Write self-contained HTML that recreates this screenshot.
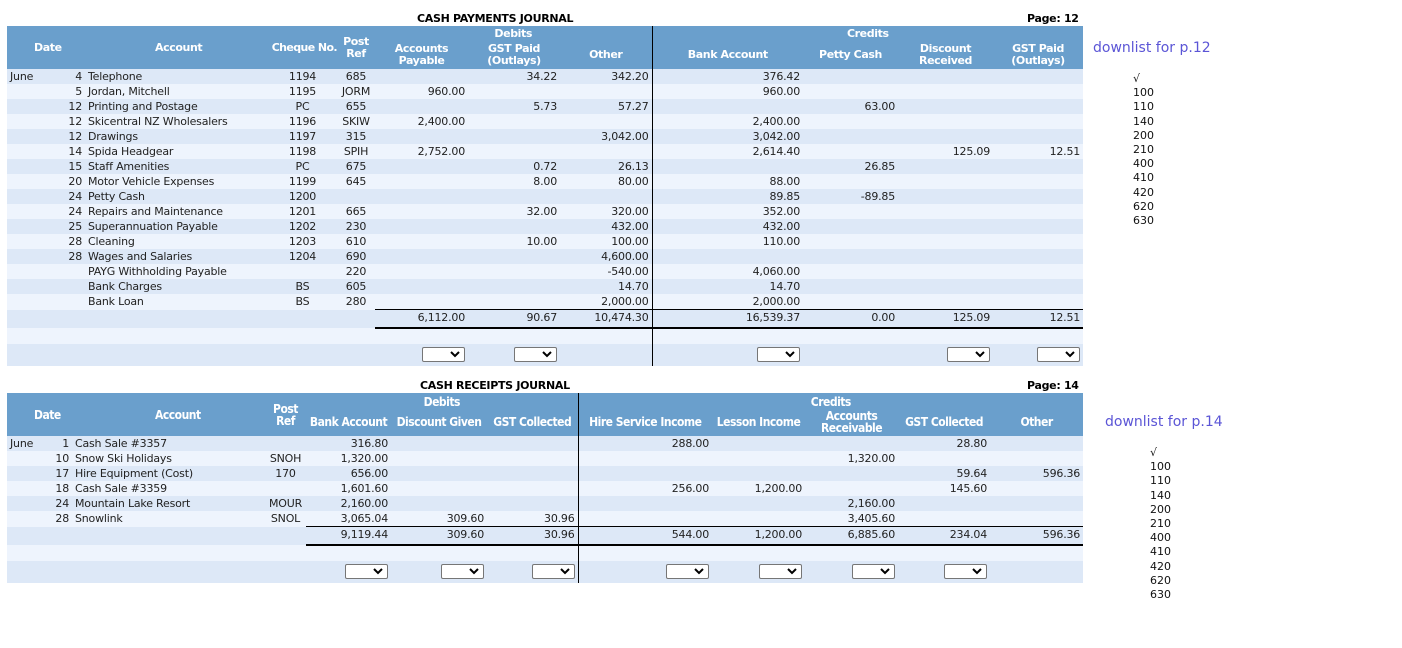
<!DOCTYPE html>
<html><head><meta charset="utf-8"><style>
body{margin:0;background:#fff;font-family:"DejaVu Sans","Liberation Sans",sans-serif;font-size:11px;color:#222;position:relative;width:1402px;height:648px;overflow:hidden}
.abs{position:absolute}
.title{font-weight:bold;color:#000;font-size:11px;font-family:"DejaVu Sans",sans-serif;letter-spacing:-0.3px}
table{border-collapse:collapse;table-layout:fixed;position:absolute;left:7px}
td{padding:0 3px;white-space:nowrap;overflow:visible;line-height:14px;font-size:11px;letter-spacing:-0.2px;text-align:left}
th{background:#6a9fcc;color:#fff;font-weight:bold;font-family:"DejaVu Sans",sans-serif;font-size:11px;line-height:12px;padding:0 2px;letter-spacing:-0.4px;white-space:nowrap}
.b2 th{font-family:"DejaVu Sans Condensed","DejaVu Sans",sans-serif;font-stretch:condensed;font-size:12px;letter-spacing:-0.5px}
tr.d td{background:#dde8f7}
tr.l td{background:#eef4fd}
tr.rw td{height:15px}
td.r,th.r{text-align:right}td.c,th.c{text-align:center}
.vl{border-left:1px solid #000}
.tt{border-top:1px solid #000}
.tb{border-bottom:2px solid #000}
.sel{display:inline-block;width:41px;height:13px;border:1px solid #767676;border-radius:2px;background:#fff;position:relative;vertical-align:middle}
.sel svg{position:absolute;right:4px;top:3px}
.side{position:absolute;color:#5b55d6;font-size:14px;font-family:"DejaVu Sans",sans-serif}
.list{position:absolute;font-size:11px;line-height:14.2px;color:#111}
.dt{float:right}
</style></head><body>
<div class="abs title" style="left:417px;top:12px">CASH PAYMENTS JOURNAL</div>
<div class="abs title" style="left:1027px;top:12px">Page: 12</div>
<table style="top:26px;width:1076px">
<colgroup><col style="width:78px"><col style="width:183px"><col style="width:69px"><col style="width:38px"><col style="width:93px"><col style="width:92px"><col style="width:92px"><col style="width:151px"><col style="width:95px"><col style="width:95px"><col style="width:90px"></colgroup>
<tr style="height:14px"><th rowspan="2" style="text-align:left;padding-left:27px">Date</th><th rowspan="2" style="text-align:left;padding-left:70px">Account</th><th rowspan="2" class="r" style="padding:0;letter-spacing:-0.6px">Cheque No.</th><th rowspan="2" class="c">Post<br>Ref</th><th colspan="3" class="c" style="vertical-align:bottom">Debits</th><th colspan="4" class="c vl" style="vertical-align:bottom">Credits</th></tr>
<tr style="height:29px"><th class="c">Accounts<br>Payable</th><th class="c">GST Paid<br>(Outlays)</th><th class="c">Other</th><th class="c vl">Bank Account</th><th class="c">Petty Cash</th><th class="c">Discount<br>Received</th><th class="c">GST Paid<br>(Outlays)</th></tr>
<tr class="rw d"><td>June<span class="dt">4</span></td><td>Telephone</td><td class="c">1194</td><td class="c">685</td><td></td><td class="r">34.22</td><td class="r">342.20</td><td class="r vl">376.42</td><td></td><td></td><td></td></tr>
<tr class="rw l"><td><span class="dt">5</span></td><td>Jordan, Mitchell</td><td class="c">1195</td><td class="c">JORM</td><td class="r">960.00</td><td></td><td></td><td class="r vl">960.00</td><td></td><td></td><td></td></tr>
<tr class="rw d"><td><span class="dt">12</span></td><td>Printing and Postage</td><td class="c">PC</td><td class="c">655</td><td></td><td class="r">5.73</td><td class="r">57.27</td><td class="vl"></td><td class="r">63.00</td><td></td><td></td></tr>
<tr class="rw l"><td><span class="dt">12</span></td><td>Skicentral NZ Wholesalers</td><td class="c">1196</td><td class="c">SKIW</td><td class="r">2,400.00</td><td></td><td></td><td class="r vl">2,400.00</td><td></td><td></td><td></td></tr>
<tr class="rw d"><td><span class="dt">12</span></td><td>Drawings</td><td class="c">1197</td><td class="c">315</td><td></td><td></td><td class="r">3,042.00</td><td class="r vl">3,042.00</td><td></td><td></td><td></td></tr>
<tr class="rw l"><td><span class="dt">14</span></td><td>Spida Headgear</td><td class="c">1198</td><td class="c">SPIH</td><td class="r">2,752.00</td><td></td><td></td><td class="r vl">2,614.40</td><td></td><td class="r">125.09</td><td class="r">12.51</td></tr>
<tr class="rw d"><td><span class="dt">15</span></td><td>Staff Amenities</td><td class="c">PC</td><td class="c">675</td><td></td><td class="r">0.72</td><td class="r">26.13</td><td class="vl"></td><td class="r">26.85</td><td></td><td></td></tr>
<tr class="rw l"><td><span class="dt">20</span></td><td>Motor Vehicle Expenses</td><td class="c">1199</td><td class="c">645</td><td></td><td class="r">8.00</td><td class="r">80.00</td><td class="r vl">88.00</td><td></td><td></td><td></td></tr>
<tr class="rw d"><td><span class="dt">24</span></td><td>Petty Cash</td><td class="c">1200</td><td></td><td></td><td></td><td></td><td class="r vl">89.85</td><td class="r">-89.85</td><td></td><td></td></tr>
<tr class="rw l"><td><span class="dt">24</span></td><td>Repairs and Maintenance</td><td class="c">1201</td><td class="c">665</td><td></td><td class="r">32.00</td><td class="r">320.00</td><td class="r vl">352.00</td><td></td><td></td><td></td></tr>
<tr class="rw d"><td><span class="dt">25</span></td><td>Superannuation Payable</td><td class="c">1202</td><td class="c">230</td><td></td><td></td><td class="r">432.00</td><td class="r vl">432.00</td><td></td><td></td><td></td></tr>
<tr class="rw l"><td><span class="dt">28</span></td><td>Cleaning</td><td class="c">1203</td><td class="c">610</td><td></td><td class="r">10.00</td><td class="r">100.00</td><td class="r vl">110.00</td><td></td><td></td><td></td></tr>
<tr class="rw d"><td><span class="dt">28</span></td><td>Wages and Salaries</td><td class="c">1204</td><td class="c">690</td><td></td><td></td><td class="r">4,600.00</td><td class="vl"></td><td></td><td></td><td></td></tr>
<tr class="rw l"><td></td><td>PAYG Withholding Payable</td><td></td><td class="c">220</td><td></td><td></td><td class="r">-540.00</td><td class="r vl">4,060.00</td><td></td><td></td><td></td></tr>
<tr class="rw d"><td></td><td>Bank Charges</td><td class="c">BS</td><td class="c">605</td><td></td><td></td><td class="r">14.70</td><td class="r vl">14.70</td><td></td><td></td><td></td></tr>
<tr class="rw l"><td></td><td>Bank Loan</td><td class="c">BS</td><td class="c">280</td><td></td><td></td><td class="r">2,000.00</td><td class="r vl">2,000.00</td><td></td><td></td><td></td></tr>
<tr class="d" style="height:18px"><td></td><td></td><td></td><td></td><td class="r tt tb">6,112.00</td><td class="r tt tb">90.67</td><td class="r tt tb">10,474.30</td><td class="r vl tt tb">16,539.37</td><td class="r tt tb">0.00</td><td class="r tt tb">125.09</td><td class="r tt tb">12.51</td></tr>
<tr class="l" style="height:16px"><td></td><td></td><td></td><td></td><td></td><td></td><td></td><td class="vl"></td><td></td><td></td><td></td></tr>
<tr class="d" style="height:22px"><td></td><td></td><td></td><td></td><td class="r"><span class="sel"><svg width="10" height="7"><path d="M1 1L5 5L9 1" stroke="#000" stroke-width="2" fill="none"/></svg></span></td><td class="r"><span class="sel"><svg width="10" height="7"><path d="M1 1L5 5L9 1" stroke="#000" stroke-width="2" fill="none"/></svg></span></td><td></td><td class="r vl"><span class="sel"><svg width="10" height="7"><path d="M1 1L5 5L9 1" stroke="#000" stroke-width="2" fill="none"/></svg></span></td><td></td><td class="r"><span class="sel"><svg width="10" height="7"><path d="M1 1L5 5L9 1" stroke="#000" stroke-width="2" fill="none"/></svg></span></td><td class="r"><span class="sel"><svg width="10" height="7"><path d="M1 1L5 5L9 1" stroke="#000" stroke-width="2" fill="none"/></svg></span></td></tr>
</table>
<div class="side" style="left:1093px;top:40px">downlist for p.12</div>
<div class="list" style="left:1133px;top:72px">√<br>100<br>110<br>140<br>200<br>210<br>400<br>410<br>420<br>620<br>630</div>

<div class="abs title" style="left:420px;top:379px">CASH RECEIPTS JOURNAL</div>
<div class="abs title" style="left:1027px;top:379px">Page: 14</div>
<table class="b2" style="top:393px;width:1076px">
<colgroup><col style="width:65px"><col style="width:193px"><col style="width:41px"><col style="width:85px"><col style="width:96px"><col style="width:91px"><col style="width:134px"><col style="width:93px"><col style="width:93px"><col style="width:92px"><col style="width:93px"></colgroup>
<tr style="height:15px"><th rowspan="2" style="text-align:left;padding-left:27px">Date</th><th rowspan="2" style="text-align:left;padding-left:83px">Account</th><th rowspan="2" class="c">Post<br>Ref</th><th colspan="3" class="c" style="vertical-align:bottom">Debits</th><th colspan="5" class="c vl" style="vertical-align:bottom">Credits</th></tr>
<tr style="height:28px"><th class="c">Bank Account</th><th class="c">Discount Given</th><th class="c">GST Collected</th><th class="c vl">Hire Service Income</th><th class="c">Lesson Income</th><th class="c">Accounts<br>Receivable</th><th class="c">GST Collected</th><th class="c">Other</th></tr>
<tr class="rw d"><td>June<span class="dt">1</span></td><td>Cash Sale #3357</td><td></td><td class="r">316.80</td><td></td><td></td><td class="r vl">288.00</td><td></td><td></td><td class="r">28.80</td><td></td></tr>
<tr class="rw l"><td><span class="dt">10</span></td><td>Snow Ski Holidays</td><td class="c">SNOH</td><td class="r">1,320.00</td><td></td><td></td><td class="vl"></td><td></td><td class="r">1,320.00</td><td></td><td></td></tr>
<tr class="rw d"><td><span class="dt">17</span></td><td>Hire Equipment (Cost)</td><td class="c">170</td><td class="r">656.00</td><td></td><td></td><td class="vl"></td><td></td><td></td><td class="r">59.64</td><td class="r">596.36</td></tr>
<tr class="rw l"><td><span class="dt">18</span></td><td>Cash Sale #3359</td><td></td><td class="r">1,601.60</td><td></td><td></td><td class="r vl">256.00</td><td class="r">1,200.00</td><td></td><td class="r">145.60</td><td></td></tr>
<tr class="rw d"><td><span class="dt">24</span></td><td>Mountain Lake Resort</td><td class="c">MOUR</td><td class="r">2,160.00</td><td></td><td></td><td class="vl"></td><td></td><td class="r">2,160.00</td><td></td><td></td></tr>
<tr class="rw l"><td><span class="dt">28</span></td><td>Snowlink</td><td class="c">SNOL</td><td class="r">3,065.04</td><td class="r">309.60</td><td class="r">30.96</td><td class="vl"></td><td></td><td class="r">3,405.60</td><td></td><td></td></tr>
<tr class="d" style="height:18px"><td></td><td></td><td></td><td class="r tt tb">9,119.44</td><td class="r tt tb">309.60</td><td class="r tt tb">30.96</td><td class="r vl tt tb">544.00</td><td class="r tt tb">1,200.00</td><td class="r tt tb">6,885.60</td><td class="r tt tb">234.04</td><td class="r tt tb">596.36</td></tr>
<tr class="l" style="height:16px"><td></td><td></td><td></td><td></td><td></td><td></td><td class="vl"></td><td></td><td></td><td></td><td></td></tr>
<tr class="d" style="height:22px"><td></td><td></td><td></td><td class="r"><span class="sel"><svg width="10" height="7"><path d="M1 1L5 5L9 1" stroke="#000" stroke-width="2" fill="none"/></svg></span></td><td class="r"><span class="sel"><svg width="10" height="7"><path d="M1 1L5 5L9 1" stroke="#000" stroke-width="2" fill="none"/></svg></span></td><td class="r"><span class="sel"><svg width="10" height="7"><path d="M1 1L5 5L9 1" stroke="#000" stroke-width="2" fill="none"/></svg></span></td><td class="r vl"><span class="sel"><svg width="10" height="7"><path d="M1 1L5 5L9 1" stroke="#000" stroke-width="2" fill="none"/></svg></span></td><td class="r"><span class="sel"><svg width="10" height="7"><path d="M1 1L5 5L9 1" stroke="#000" stroke-width="2" fill="none"/></svg></span></td><td class="r"><span class="sel"><svg width="10" height="7"><path d="M1 1L5 5L9 1" stroke="#000" stroke-width="2" fill="none"/></svg></span></td><td class="r"><span class="sel"><svg width="10" height="7"><path d="M1 1L5 5L9 1" stroke="#000" stroke-width="2" fill="none"/></svg></span></td><td></td></tr>
</table>
<div class="side" style="left:1105px;top:414px">downlist for p.14</div>
<div class="list" style="left:1150px;top:446px">√<br>100<br>110<br>140<br>200<br>210<br>400<br>410<br>420<br>620<br>630</div>
</body></html>
